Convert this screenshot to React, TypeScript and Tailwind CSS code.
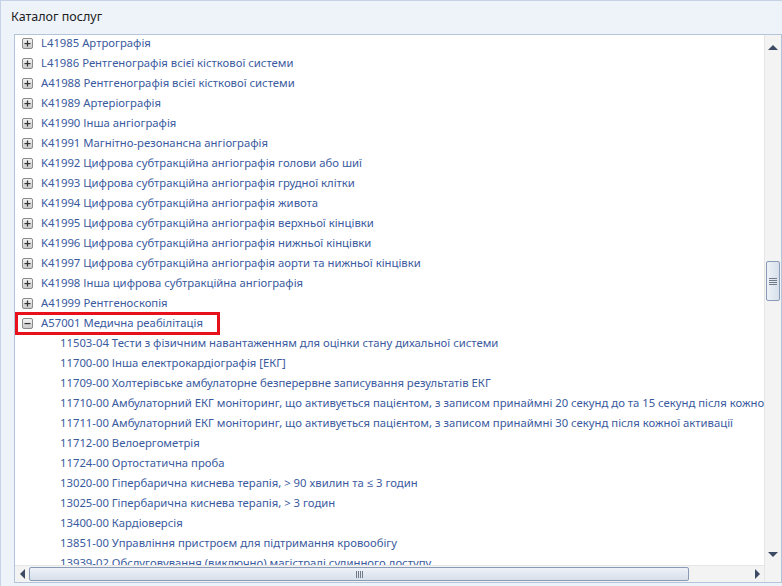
import type { ReactNode } from 'react';

const parents = [
  'L41985 Артрографія',
  'L41986 Рентгенографія всієї кісткової системи',
  'A41988 Рентгенографія всієї кісткової системи',
  'K41989 Артеріографія',
  'K41990 Інша ангіографія',
  'K41991 Магнітно-резонансна ангіографія',
  'K41992 Цифрова субтракційна ангіографія голови або шиї',
  'K41993 Цифрова субтракційна ангіографія грудної клітки',
  'K41994 Цифрова субтракційна ангіографія живота',
  'K41995 Цифрова субтракційна ангіографія верхньої кінцівки',
  'K41996 Цифрова субтракційна ангіографія нижньої кінцівки',
  'K41997 Цифрова субтракційна ангіографія аорти та нижньої кінцівки',
  'K41998 Інша цифрова субтракційна ангіографія',
  'A41999 Рентгеноскопія',
];

const children = [
  '11503-04 Тести з фізичним навантаженням для оцінки стану дихальної системи',
  '11700-00 Інша електрокардіографія [ЕКГ]',
  '11709-00 Холтерівське амбулаторне безперервне записування результатів ЕКГ',
  '11710-00 Амбулаторний ЕКГ моніторинг, що активується пацієнтом, з записом принаймні 20 секунд до та 15 секунд після кожної активації',
  '11711-00 Амбулаторний ЕКГ моніторинг, що активується пацієнтом, з записом принаймні 30 секунд після кожної активації',
  '11712-00 Велоергометрія',
  '11724-00 Ортостатична проба',
  '13020-00 Гіпербарична киснева терапія, > 90 хвилин та ≤ 3 годин',
  '13025-00 Гіпербарична киснева терапія, > 3 годин',
  '13400-00 Кардіоверсія',
  '13851-00 Управління пристроєм для підтримання кровообігу',
  '13939-02 Обслуговування (виключно) магістралі судинного доступу',
];

function Toggle({ open }: { open?: boolean }) {
  return (
    <span className="flex h-[11px] w-[11px] shrink-0 items-center justify-center rounded-[2px] border border-[#8a8a8a] bg-gradient-to-b from-[#f4f4f4] to-[#c9c9c9]">
      <svg width="7" height="7" viewBox="0 0 7 7">
        <rect x="0.5" y="3" width="6" height="1.2" fill="#333" />
        {!open && <rect x="2.9" y="0.5" width="1.2" height="6" fill="#333" />}
      </svg>
    </span>
  );
}

function Row({ children, indent }: { children: ReactNode; indent?: boolean }) {
  return (
    <div className={`flex h-5 items-center whitespace-nowrap ${indent ? 'pl-[44px]' : 'pl-[6px]'}`}>
      {children}
    </div>
  );
}

function Arrow({ dir }: { dir: 'up' | 'down' | 'left' | 'right' }) {
  const pts = {
    up: '0,6 5,1 10,6',
    down: '0,1 10,1 5,6',
    left: '6,0 6,10 1,5',
    right: '1,0 1,10 6,5',
  }[dir];
  const vertical = dir === 'up' || dir === 'down';
  return (
    <svg width={vertical ? 10 : 7} height={vertical ? 7 : 10} viewBox={vertical ? '0 0 10 7' : '0 0 7 10'}>
      <polygon points={pts} fill="#3c4a63" />
    </svg>
  );
}

export default function App() {
  return (
    <div
      className="h-[586px] w-[782px] overflow-hidden bg-[#f0f4fa] text-[11.3px]"
      style={{ fontFamily: '"Segoe UI", "Noto Sans", "Open Sans", sans-serif' }}
    >
      <div className="flex h-full flex-col border-l border-t border-[#c5d3e6] bg-[#eef3fa]">
        <div className="flex h-[33px] items-center pl-[10px] text-[12.5px] text-[#1e1e1e]">Каталог послуг</div>
        <div className="ml-[13px] flex min-h-0 flex-1 border border-[#b4c4da] bg-white">
          <div className="flex min-w-0 flex-1 flex-col">
            <div className="min-h-0 flex-1 overflow-hidden pl-[1px] text-[#3a5a9e]">
              <div className="-mt-[2px]">
                {parents.map((p) => (
                  <Row key={p}>
                    <Toggle />
                    <span className="ml-[8px]">{p}</span>
                  </Row>
                ))}
                <div className="relative">
                  <Row>
                    <Toggle open />
                    <span className="ml-[8px]">A57001 Медична реабілітація</span>
                  </Row>
                  <div className="absolute -top-[1px] -left-[1px] h-[23px] w-[205px] border-[3px] border-[#e8101a]" />
                </div>
                {children.map((c) => (
                  <Row key={c} indent>
                    {c}
                  </Row>
                ))}
              </div>
            </div>
            <div className="flex h-[17px] items-center border-t border-[#e6e6e6] bg-[#f3f3f3]">
              <div className="flex w-[14px] justify-center">
                <Arrow dir="left" />
              </div>
              <div className="flex h-[14px] w-[660px] items-center justify-center rounded-[2px] border border-[#8a9bb8] bg-gradient-to-b from-[#eef2f8] to-[#d7dfea]">
                <div className="flex gap-[1px]">
                  {[0, 1, 2, 3].map((i) => (
                    <span key={i} className="h-[7px] w-[1px] bg-[#707a88]" />
                  ))}
                </div>
              </div>
              <div className="flex-1" />
              <div className="flex w-[14px] justify-center">
                <Arrow dir="right" />
              </div>
            </div>
          </div>
          <div className="flex w-[17px] flex-col border-l border-[#e6e6e6] bg-[#f3f3f3]">
            <div className="flex h-[16px] items-end justify-center">
              <Arrow dir="up" />
            </div>
            <div className="flex-1 pt-[210px]">
              <div className="ml-[1px] flex h-[40px] w-[14px] items-center justify-center rounded-[2px] border border-[#8a9bb8] bg-gradient-to-r from-[#eef2f8] to-[#d7dfea]">
                <div className="flex flex-col gap-[1px]">
                  {[0, 1, 2, 3].map((i) => (
                    <span key={i} className="h-[1px] w-[8px] bg-[#707a88]" />
                  ))}
                </div>
              </div>
            </div>
            <div className="flex h-[16px] items-start justify-center pt-[2px]">
              <Arrow dir="down" />
            </div>
            <div className="h-[17px]" />
          </div>
        </div>
        <div className="h-[3px]" />
      </div>
    </div>
  );
}
